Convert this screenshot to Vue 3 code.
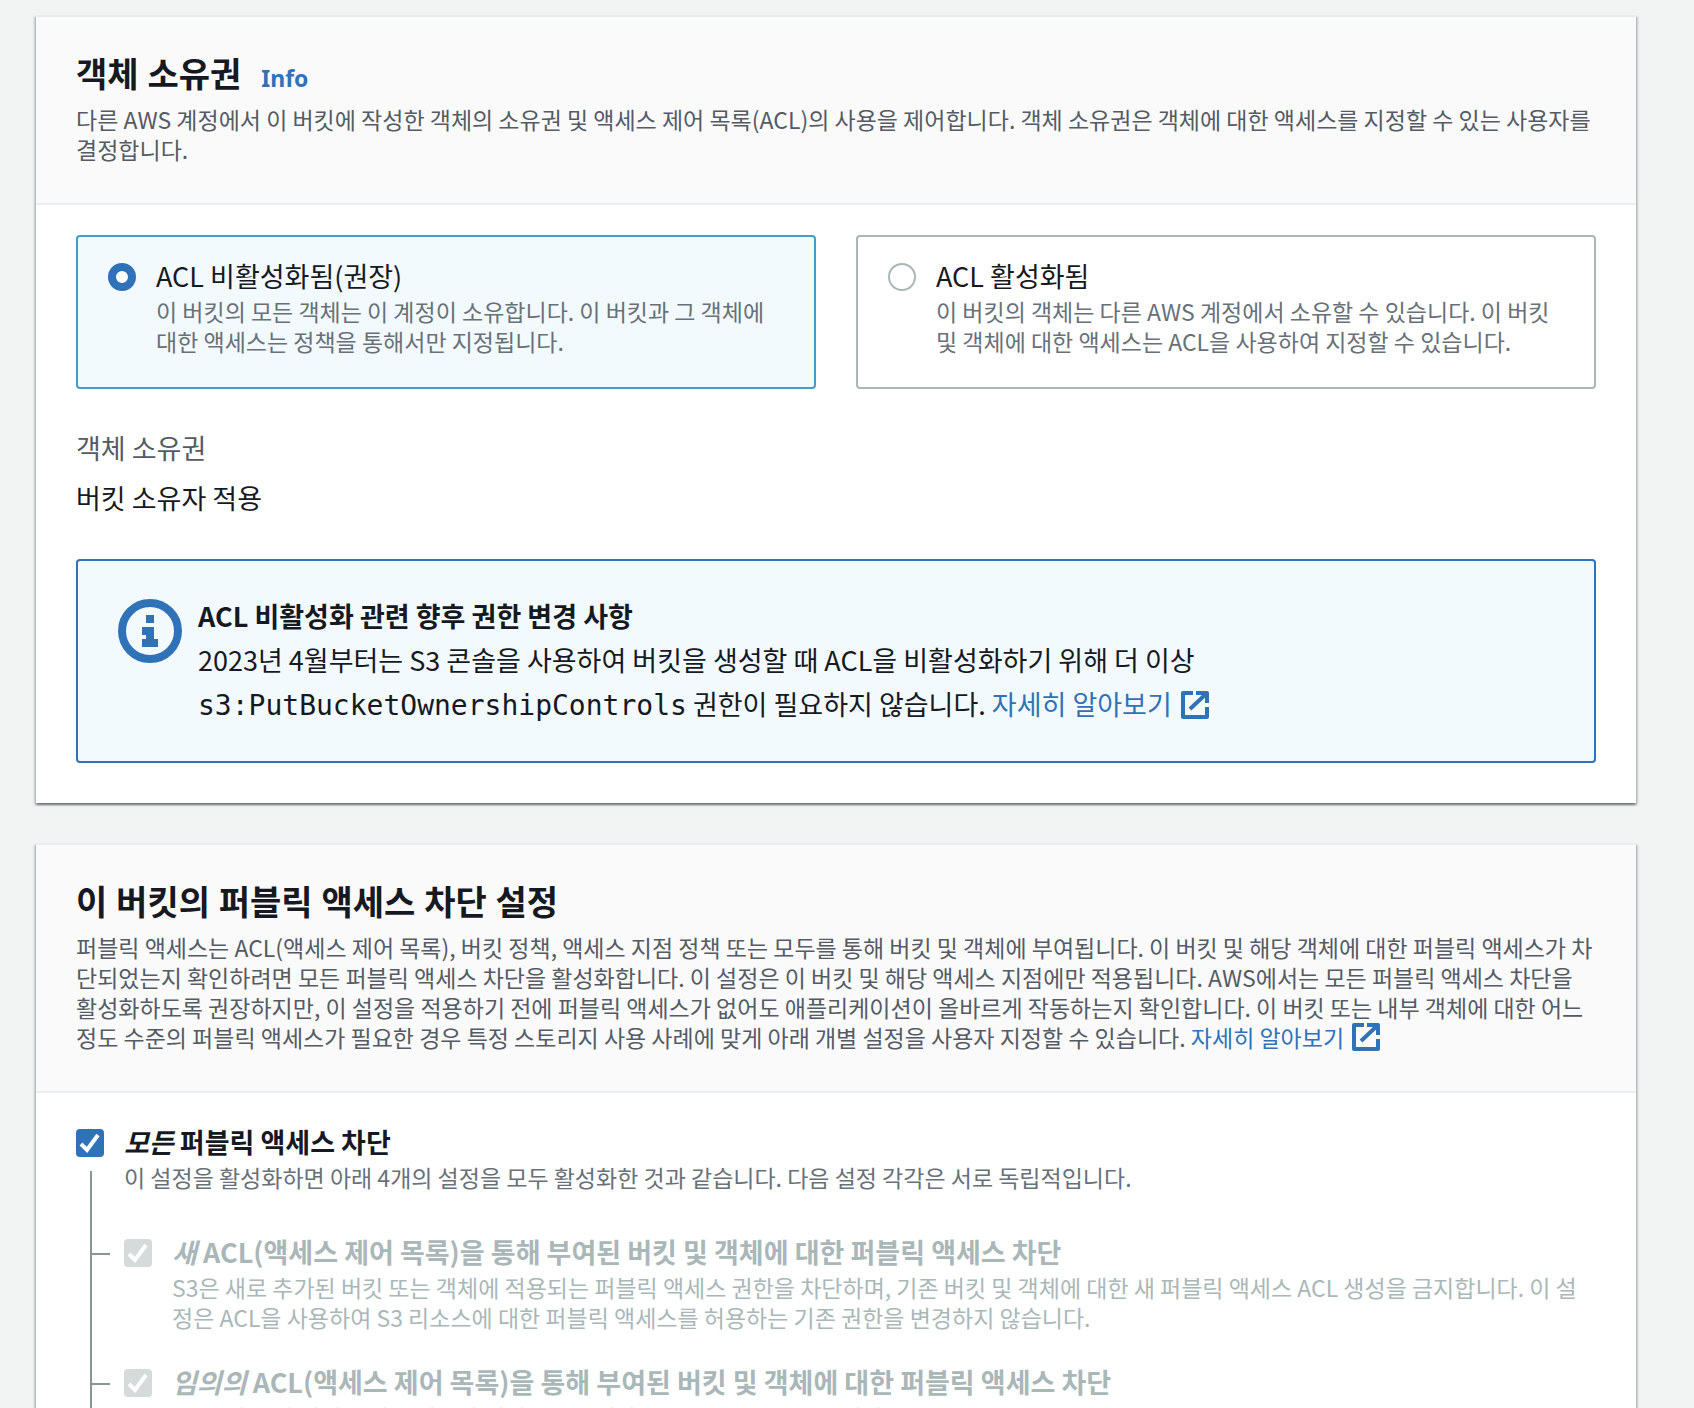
<script setup>
import { ref } from 'vue'

const ownership = ref('disabled')
const blockAll = ref(true)

const ownershipOptions = [
  {
    value: 'disabled',
    title: 'ACL 비활성화됨(권장)',
    lines: ['이 버킷의 모든 객체는 이 계정이 소유합니다. 이 버킷과 그 객체에', '대한 액세스는 정책을 통해서만 지정됩니다.'],
  },
  {
    value: 'enabled',
    title: 'ACL 활성화됨',
    lines: ['이 버킷의 객체는 다른 AWS 계정에서 소유할 수 있습니다. 이 버킷', '및 객체에 대한 액세스는 ACL을 사용하여 지정할 수 있습니다.'],
  },
]

const blockSettings = [
  {
    id: 'new-acl',
    lead: '새',
    title: 'ACL(액세스 제어 목록)을 통해 부여된 버킷 및 객체에 대한 퍼블릭 액세스 차단',
    lines: [
      'S3은 새로 추가된 버킷 또는 객체에 적용되는 퍼블릭 액세스 권한을 차단하며, 기존 버킷 및 객체에 대한 새 퍼블릭 액세스 ACL 생성을 금지합니다. 이 설',
      '정은 ACL을 사용하여 S3 리소스에 대한 퍼블릭 액세스를 허용하는 기존 권한을 변경하지 않습니다.',
    ],
  },
  {
    id: 'any-acl',
    lead: '임의의',
    title: 'ACL(액세스 제어 목록)을 통해 부여된 버킷 및 객체에 대한 퍼블릭 액세스 차단',
    lines: ['S3은 버킷 및 객체에 대한 퍼블릭 액세스를 부여하는 모든 ACL을 무시합니다.'],
  },
]
</script>

<template>
  <main class="page">
    <section class="panel">
      <header class="panel-header">
        <div class="heading">
          <h2>객체 소유권</h2>
          <a class="info" href="#info">Info</a>
        </div>
        <p class="desc">
          <span class="line">다른 AWS 계정에서 이 버킷에 작성한 객체의 소유권 및 액세스 제어 목록(ACL)의 사용을 제어합니다. 객체 소유권은 객체에 대한 액세스를 지정할 수 있는 사용자를</span>
          <span class="line">결정합니다.</span>
        </p>
      </header>

      <div class="panel-body">
        <div class="tiles" role="radiogroup" aria-label="객체 소유권">
          <label
            v-for="option in ownershipOptions"
            :key="option.value"
            class="tile"
            :class="{ selected: ownership === option.value }"
          >
            <input v-model="ownership" class="radio" type="radio" name="ownership" :value="option.value" />
            <span class="tile-text">
              <span class="label">{{ option.title }}</span>
              <span class="hint">
                <span v-for="line in option.lines" :key="line" class="line">{{ line }}</span>
              </span>
            </span>
          </label>
        </div>

        <dl class="pair">
          <dt>객체 소유권</dt>
          <dd>버킷 소유자 적용</dd>
        </dl>

        <div class="alert" role="status">
          <svg class="alert-icon" viewBox="0 0 64 64" aria-hidden="true">
            <circle cx="32" cy="32" r="28" fill="none" stroke="currentColor" stroke-width="8" />
            <path d="M28 16h8v8h-8zM24 28h12v12h4v8H24v-8h4v-4h-4z" fill="currentColor" />
          </svg>
          <div class="alert-text">
            <strong>ACL 비활성화 관련 향후 권한 변경 사항</strong>
            <p>
              <span class="line">2023년 4월부터는 S3 콘솔을 사용하여 버킷을 생성할 때 ACL을 비활성화하기 위해 더 이상</span>
              <span class="line"><code>s3:PutBucketOwnershipControls</code> 권한이 필요하지 않습니다. <a href="#acl">자세히 알아보기
                <svg class="external" viewBox="0 0 28 28" aria-hidden="true">
                  <path d="M12 2H2v24h24V16M15 2h11v10M26 2L9 18" />
                </svg></a></span>
            </p>
          </div>
        </div>
      </div>
    </section>

    <section class="panel">
      <header class="panel-header">
        <div class="heading">
          <h2>이 버킷의 퍼블릭 액세스 차단 설정</h2>
        </div>
        <p class="desc">
          <span class="line">퍼블릭 액세스는 ACL(액세스 제어 목록), 버킷 정책, 액세스 지점 정책 또는 모두를 통해 버킷 및 객체에 부여됩니다. 이 버킷 및 해당 객체에 대한 퍼블릭 액세스가 차</span>
          <span class="line">단되었는지 확인하려면 모든 퍼블릭 액세스 차단을 활성화합니다. 이 설정은 이 버킷 및 해당 액세스 지점에만 적용됩니다. AWS에서는 모든 퍼블릭 액세스 차단을</span>
          <span class="line">활성화하도록 권장하지만, 이 설정을 적용하기 전에 퍼블릭 액세스가 없어도 애플리케이션이 올바르게 작동하는지 확인합니다. 이 버킷 또는 내부 객체에 대한 어느</span>
          <span class="line">정도 수준의 퍼블릭 액세스가 필요한 경우 특정 스토리지 사용 사례에 맞게 아래 개별 설정을 사용자 지정할 수 있습니다. <a href="#public-access">자세히 알아보기
            <svg class="external" viewBox="0 0 28 28" aria-hidden="true">
              <path d="M12 2H2v24h24V16M15 2h11v10M26 2L9 18" />
            </svg></a></span>
        </p>
      </header>

      <div class="panel-body">
        <div class="tree">
          <div class="rail">
            <input id="block-all" v-model="blockAll" class="check" type="checkbox" />
          </div>
          <div class="branch">
            <label class="label strong" for="block-all"><em>모든</em> 퍼블릭 액세스 차단</label>
            <span class="hint">
              <span class="line">이 설정을 활성화하면 아래 4개의 설정을 모두 활성화한 것과 같습니다. 다음 설정 각각은 서로 독립적입니다.</span>
            </span>
            <ul class="children">
              <li v-for="item in blockSettings" :key="item.id" class="child">
                <input :id="item.id" class="check" type="checkbox" :checked="blockAll" :disabled="blockAll" />
                <div>
                  <label class="label strong" :for="item.id"><em>{{ item.lead }}</em> {{ item.title }}</label>
                  <span class="hint">
                    <span v-for="line in item.lines" :key="line" class="line">{{ line }}</span>
                  </span>
                </div>
              </li>
            </ul>
          </div>
        </div>
      </div>
    </section>
  </main>
</template>

<style>
body {
  margin: 0;
  background: #f2f3f3;
}
</style>

<style scoped>
.page {
  box-sizing: border-box;
  height: 100vh;
  overflow: hidden;
  padding: 15px 58px 0 36px;
  font-family: "Noto Sans CJK KR", "Noto Sans", sans-serif;
  font-size: 27px;
  line-height: 44px;
  color: #16191f;
}

h2,
p,
dl,
dd,
ul {
  margin: 0;
  padding: 0;
}

a {
  color: #2f72b8;
  text-decoration: none;
}

.line {
  display: block;
  white-space: nowrap;
}

.panel {
  margin-bottom: 40px;
  border-top: 2px solid #eaeded;
  background: #fff;
  box-shadow:
    0 2px 2px 0 rgba(0, 28, 36, 0.4),
    2px 2px 2px 0 rgba(0, 28, 36, 0.15),
    -2px 2px 2px 0 rgba(0, 28, 36, 0.15);
}

.panel-header {
  padding: 35px 40px 39px;
  border-bottom: 2px solid #eaeded;
  background: #fafafa;
}

.heading {
  display: flex;
  align-items: baseline;
  gap: 20px;
  margin-bottom: 8px;
  font-family: "Noto Sans", "Noto Sans CJK KR", sans-serif;
}

h2 {
  font-size: 34px;
  line-height: 44px;
  font-weight: 700;
}

.info {
  font-size: 23px;
  line-height: 30px;
  font-weight: 700;
}

.desc {
  font-size: 23px;
  line-height: 30px;
  color: #545b64;
}

.panel-body {
  padding: 30px 40px 40px;
}

.tiles {
  display: grid;
  grid-template-columns: 1fr 1fr;
  gap: 40px;
}

.tile {
  display: flex;
  gap: 20px;
  padding: 19px 30px 31px;
  border: 2px solid #aab7b8;
  border-radius: 4px;
}

.tile.selected {
  border-color: #449fc8;
  background: #f2fafd;
}

.radio,
.check {
  appearance: none;
  box-sizing: border-box;
  flex: none;
  width: 28px;
  height: 28px;
  margin: 7px 0 0;
}

.radio {
  border: 2px solid #aab7b8;
  border-radius: 50%;
  background: #fff;
}

.radio:checked {
  border: 8px solid #2f72b8;
}

.label {
  display: block;
  line-height: 40px;
}

.strong {
  font-weight: 700;
}

.hint {
  display: block;
  font-size: 23px;
  line-height: 30px;
  color: #687078;
}

.pair {
  display: flex;
  flex-direction: column;
  gap: 6px;
  margin: 37px 0 39px;
}

.pair dt {
  color: #545b64;
}

.alert {
  display: flex;
  gap: 16px;
  padding: 33px 40px 35px;
  border: 2px solid #2f72b8;
  border-radius: 4px;
  background: #f2fafd;
}

.alert-icon {
  flex: none;
  width: 64px;
  height: 64px;
  margin-top: 5px;
  color: #2f72b8;
}

.alert-text strong {
  display: block;
}

code {
  font-family: "DejaVu Sans Mono", monospace;
  font-size: 28px;
  line-height: 30px;
}

.external {
  width: 28px;
  height: 28px;
  margin-left: 3px;
  vertical-align: -4px;
  fill: none;
  stroke: currentColor;
  stroke-width: 4;
  stroke-linejoin: round;
}

.tree {
  display: flex;
  gap: 20px;
  margin-top: -1px;
}

.rail {
  display: flex;
  flex-direction: column;
  gap: 14px;
  width: 28px;
}

.rail::after {
  content: "";
  flex: 1;
  margin-left: 14px;
  border-left: 2px solid #879596;
}

.check {
  border-radius: 4px;
  background: #2f72b8 url("data:image/svg+xml,%3Csvg xmlns='http://www.w3.org/2000/svg' viewBox='0 0 28 28'%3E%3Cpath d='M5 15l6 6L22 6' fill='none' stroke='white' stroke-width='4'/%3E%3C/svg%3E") center / 28px 28px no-repeat;
}

.check:disabled {
  background-color: #d5dbdb;
}

.children {
  display: flex;
  flex-direction: column;
  gap: 30px;
  margin-top: 40px;
  list-style: none;
}

.child {
  position: relative;
  display: flex;
  gap: 20px;
  color: #aab7b8;
}

.child::before {
  content: "";
  position: absolute;
  top: 21px;
  left: -32px;
  width: 18px;
  height: 2px;
  background: #879596;
}

.child .hint {
  color: #aab7b8;
}
</style>
